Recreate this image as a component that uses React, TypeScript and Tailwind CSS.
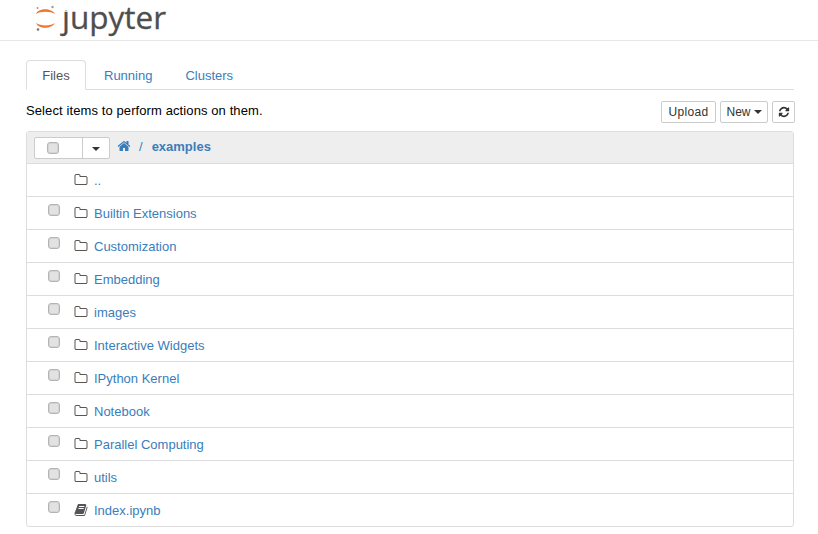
const rows = ["Builtin Extensions", "Customization", "Embedding", "images", "Interactive Widgets", "IPython Kernel", "Notebook", "Parallel Computing", "utils"];

function Folder() {
  return (
    <svg width="14" height="14" viewBox="0 0 1792 1792" className="block" fill="#5a5550">
      <path d="M1600 1312v-704q0-40-28-68t-68-28h-704q-40 0-68-28t-28-68v-64q0-40-28-68t-68-28h-320q-40 0-68 28t-28 68v960q0 40 28 68t68 28h1216q40 0 68-28t28-68zm128-704v704q0 92-66 158t-158 66h-1216q-92 0-158-66t-66-158v-960q0-92 66-158t158-66h320q92 0 158 66t66 158v32h672q92 0 158 66t66 158z" />
    </svg>
  );
}

function Book() {
  return (
    <svg width="14" height="14" viewBox="0 0 1792 1792" className="block" fill="#555555">
      <path d="M1703 478q40 57 18 129l-275 906q-19 64-76.5 107.5t-122.5 43.5h-923q-77 0-148.5-53.5t-99.5-131.5q-24-67-2-127 0-4 3-27t4-37q1-8-3-21.5t-3-19.5q2-11 8-21t16.5-23.5 16.5-23.5q23-38 45-91.5t30-91.5q3-10 .5-30t-.5-28q3-11 17-28t17-23q21-36 42-92t25-90q1-9-2.5-32t.5-28q4-13 22-30.5t22-22.5q19-26 42.5-84.5t27.5-96.5q1-8-3-25.5t-2-26.5q2-8 9-18t18-23 17-21q8-12 16.5-30.5t15-35 16-36 19.5-32 26.5-23.5 36-11.5 47.5 5.5l-1 3q38-9 51-9h761q74 0 114 56t18 130l-274 906q-36 119-71.5 153.5t-128.5 34.5h-869q-27 0-38 15-11 16-1 43 24 70 144 70h923q29 0 56-15.5t35-41.5l300-987q7-22 5-57 38 15 59 43zm-1064 2q-4 13 2 22.5t20 9.5h608q13 0 25.5-9.5t16.5-22.5l21-64q4-13-2-22.5t-20-9.5h-608q-13 0-25.5 9.5t-16.5 22.5zm-83 256q-4 13 2 22.5t20 9.5h608q13 0 25.5-9.5t16.5-22.5l21-64q4-13-2-22.5t-20-9.5h-608q-13 0-25.5 9.5t-16.5 22.5z" />
    </svg>
  );
}

function Check() {
  return <span className="block w-[12px] h-[12px] rounded-[3px] border border-[#b4b4b4] bg-[#e2e2e2] shadow-[inset_0_0_0_1px_#d4d4d4]" />;
}

function Caret() {
  return <span className="w-0 h-0 border-x-[4px] border-x-transparent border-t-[4px] border-t-[#333333]" />;
}

function Row({ name, icon, check = true }: { name: string; icon: React.ReactNode; check?: boolean }) {
  return (
    <div className="flex h-[33px] items-center border-t border-[#dddddd] pt-[1px]">
      <div className="w-[47px] pl-[21px] -mt-[7px]">{check ? <Check /> : null}</div>
      <div className="w-[20px] -mt-[1px] flex">{icon}</div>
      <span className="text-[#3a7dbb] text-[13px] leading-[18px]">{name}</span>
    </div>
  );
}

export default function App() {
  return (
    <div className="w-[818px] h-[534px] overflow-hidden bg-white text-[13px] text-black font-['Liberation_Sans',Arial,sans-serif]">
      <header className="h-[41px] border-b border-[#e7e7e7] flex pl-[35px]">
        <svg width="22" height="30" viewBox="0 0 22 30" className="mt-[4px] shrink-0">
          <path d="M1 10C3.5 3.8 16.5 3.8 20 10 15.5 7 5.5 7 1 10z" fill="#f37726" />
          <path d="M1 19C3.5 25.4 16.5 25.4 20 19 15.5 22.2 5.5 22.2 1 19z" fill="#f37726" />
          <circle cx="17.5" cy="3" r="1.2" fill="#9a9a9a" />
          <circle cx="2.5" cy="4" r="1" fill="#9a9a9a" />
          <circle cx="3" cy="25.5" r="1.3" fill="#767677" />
        </svg>
        <div className="relative ml-[5px] h-[34px]">
          <span className="block text-[31.5px] leading-[34px] text-[#4e4e4e] font-['Open_Sans',sans-serif] [-webkit-text-stroke:0.3px_#4e4e4e]">jupyter</span>
          <span className="absolute left-0 top-0 w-[11px] h-[10px] bg-white" />
        </div>
      </header>

      <main className="pl-[26px] pr-[24px]">
        <nav className="mt-[19px] h-[30px] flex border-b border-[#dddddd]">
          <div className="w-[60px] h-[30px] border border-[#dddddd] border-b-white rounded-t-[4px] bg-white text-[#555555] flex items-center justify-center pt-[1px]">Files</div>
          <div className="ml-[18px] h-[29px] flex items-center text-[#3a7dbb] pt-[2px]">Running</div>
          <div className="ml-[33px] h-[29px] flex items-center text-[#3a7dbb] pt-[2px]">Clusters</div>
        </nav>

        <div className="h-[41px] flex items-start justify-between">
          <span className="mt-[12px] leading-[18px] tracking-[0.1px]">Select items to perform actions on them.</span>
          <div className="mt-[11px] -mr-[1px] flex gap-[4px]">
            <button className="h-[22px] w-[55px] border border-[#cccccc] rounded-[2px] text-[12px] text-[#333333] tracking-[0.3px] flex items-center justify-center">Upload</button>
            <button className="h-[22px] w-[48px] border border-[#cccccc] rounded-[2px] text-[12px] text-[#333333] flex items-center justify-center gap-[3px]">
              New
              <Caret />
            </button>
            <button className="h-[22px] w-[23px] border border-[#cccccc] rounded-[2px] text-[#333333] flex items-center justify-center">
              <svg width="12" height="12" viewBox="0 0 1792 1792" fill="#333333">
                <path d="M1639 1056q0 5-1 7-64 268-268 434.5t-478 166.5q-146 0-282.5-55t-243.5-157l-129 129q-19 19-45 19t-45-19-19-45v-448q0-26 19-45t45-19h448q26 0 45 19t19 45-19 45l-137 137q71 66 161 102t187 36q134 0 250-65t186-179q11-17 53-117 8-23 30-23h192q13 0 22.5 9.5t9.5 22.5zm25-800v448q0 26-19 45t-45 19h-448q-26 0-45-19t-19-45 19-45l138-138q-148-137-349-137-134 0-250 65t-186 179q-11 17-53 117-8 23-30 23h-199q-13 0-22.5-9.5t-9.5-22.5v-7q65-268 270-434.5t480-166.5q146 0 284 55.5t245 156.5l130-129q19-19 45-19t45 19 19 45z" />
              </svg>
            </button>
          </div>
        </div>

        <section className="border border-[#dddddd] rounded-[3px]">
          <div className="h-[31px] bg-[#eeeeee] flex items-center pl-[7px]">
            <div className="h-[22px] w-[76px] mt-[1px] flex border border-[#cccccc] rounded-[2px] bg-white">
              <div className="w-[48px] border-r border-[#cccccc] flex items-center pl-[12px]"><Check /></div>
              <div className="flex-1 flex items-center justify-center pt-[1px]"><Caret /></div>
            </div>
            <svg width="14" height="14" viewBox="0 0 1792 1792" fill="#3a7dbb" className="ml-[7px] -mt-[3px]">
              <path d="M1472 992v480q0 26-19 45t-45 19h-384v-384h-256v384h-384q-26 0-45-19t-19-45v-480q0-1 .5-3t.5-3l575-474 575 474q1 2 1 6zm223-69l-62 74q-8 9-21 11h-3q-13 0-21-7l-692-577-692 577q-12 8-24 7-13-2-21-11l-62-74q-8-10-7-23.5t11-21.5l719-599q32-26 76-26t76 26l244 204v-195q0-14 9-23t23-9h192q14 0 23 9t9 23v408l219 182q10 8 11 21.5t-7 23.5z" />
            </svg>
            <span className="ml-[8px] -mt-[2px] text-[#3a7dbb]">/</span>
            <span className="ml-[9px] -mt-[2px] text-[#3a7dbb] font-bold">examples</span>
          </div>
          <Row name=".." icon={<Folder />} check={false} />
          {rows.map((r) => (
            <Row key={r} name={r} icon={<Folder />} />
          ))}
          <Row name="Index.ipynb" icon={<Book />} />
        </section>
      </main>
    </div>
  );
}
